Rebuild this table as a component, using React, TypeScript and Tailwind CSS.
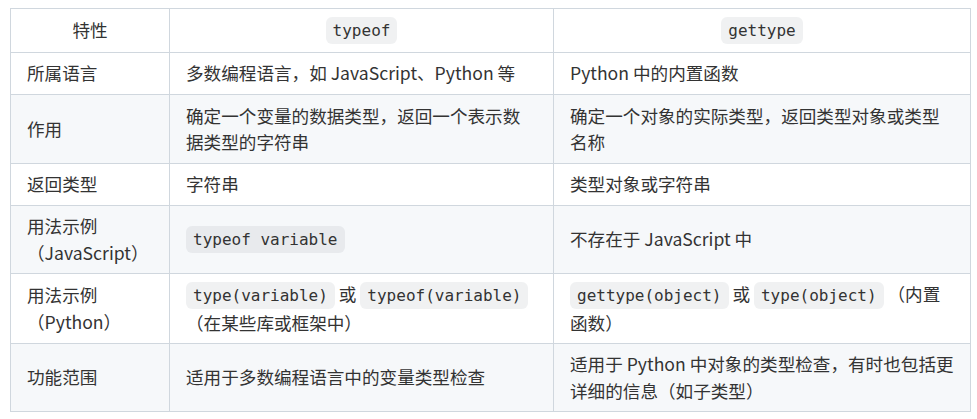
import React from "react";

const C = ({ children }: { children: React.ReactNode }) => (
  <code className="rounded-[6px] bg-[#818b981f] px-[7px] py-[4px] font-['DejaVu_Sans_Mono',monospace] text-[16px]">
    {children}
  </code>
);

const td = "border border-[#d0d7de] px-4 align-middle";

export default function App() {
  return (
    <div className="min-h-[419px] w-[977px] bg-white pl-[10px] pt-[8px]">
      <table className="w-[960px] table-fixed border-collapse font-['Noto_Sans_CJK_SC','Noto_Sans',sans-serif] text-[17.6px] leading-[26.4px] text-[#333]">
        <colgroup>
          <col className="w-[159px]" />
          <col className="w-[384px]" />
          <col className="w-[417px]" />
        </colgroup>
        <thead>
          <tr className="h-[44px] bg-white">
            <th className={`${td} text-center font-normal`}>特性</th>
            <th className={`${td} text-center font-normal`}>
              <C>typeof</C>
            </th>
            <th className={`${td} text-center font-normal`}>
              <C>gettype</C>
            </th>
          </tr>
        </thead>
        <tbody>
          <tr className="h-[42px] bg-white">
            <td className={td}>所属语言</td>
            <td className={td}>多数编程语言，如 JavaScript、Python 等</td>
            <td className={td}>Python 中的内置函数</td>
          </tr>
          <tr className="h-[69px] bg-[#f6f8fa]">
            <td className={td}>作用</td>
            <td className={td}>确定一个变量的数据类型，返回一个表示数据类型的字符串</td>
            <td className={td}>确定一个对象的实际类型，返回类型对象或类型名称</td>
          </tr>
          <tr className="h-[42px] bg-white">
            <td className={td}>返回类型</td>
            <td className={td}>字符串</td>
            <td className={td}>类型对象或字符串</td>
          </tr>
          <tr className="h-[68px] bg-[#f6f8fa]">
            <td className={td}>用法示例（JavaScript）</td>
            <td className={td}>
              <C>typeof variable</C>
            </td>
            <td className={td}>不存在于 JavaScript 中</td>
          </tr>
          <tr className="h-[70px] bg-white">
            <td className={td}>用法示例（Python）</td>
            <td className={td}>
              <C>type(variable)</C> 或 <C>typeof(variable)</C> （在某些库或框架中）
            </td>
            <td className={td}>
              <C>gettype(object)</C> 或 <C>type(object)</C> （内置函数）
            </td>
          </tr>
          <tr className="h-[68px] bg-[#f6f8fa]">
            <td className={td}>功能范围</td>
            <td className={td}>适用于多数编程语言中的变量类型检查</td>
            <td className={td}>适用于 Python 中对象的类型检查，有时也包括更详细的信息（如子类型）</td>
          </tr>
        </tbody>
      </table>
    </div>
  );
}
